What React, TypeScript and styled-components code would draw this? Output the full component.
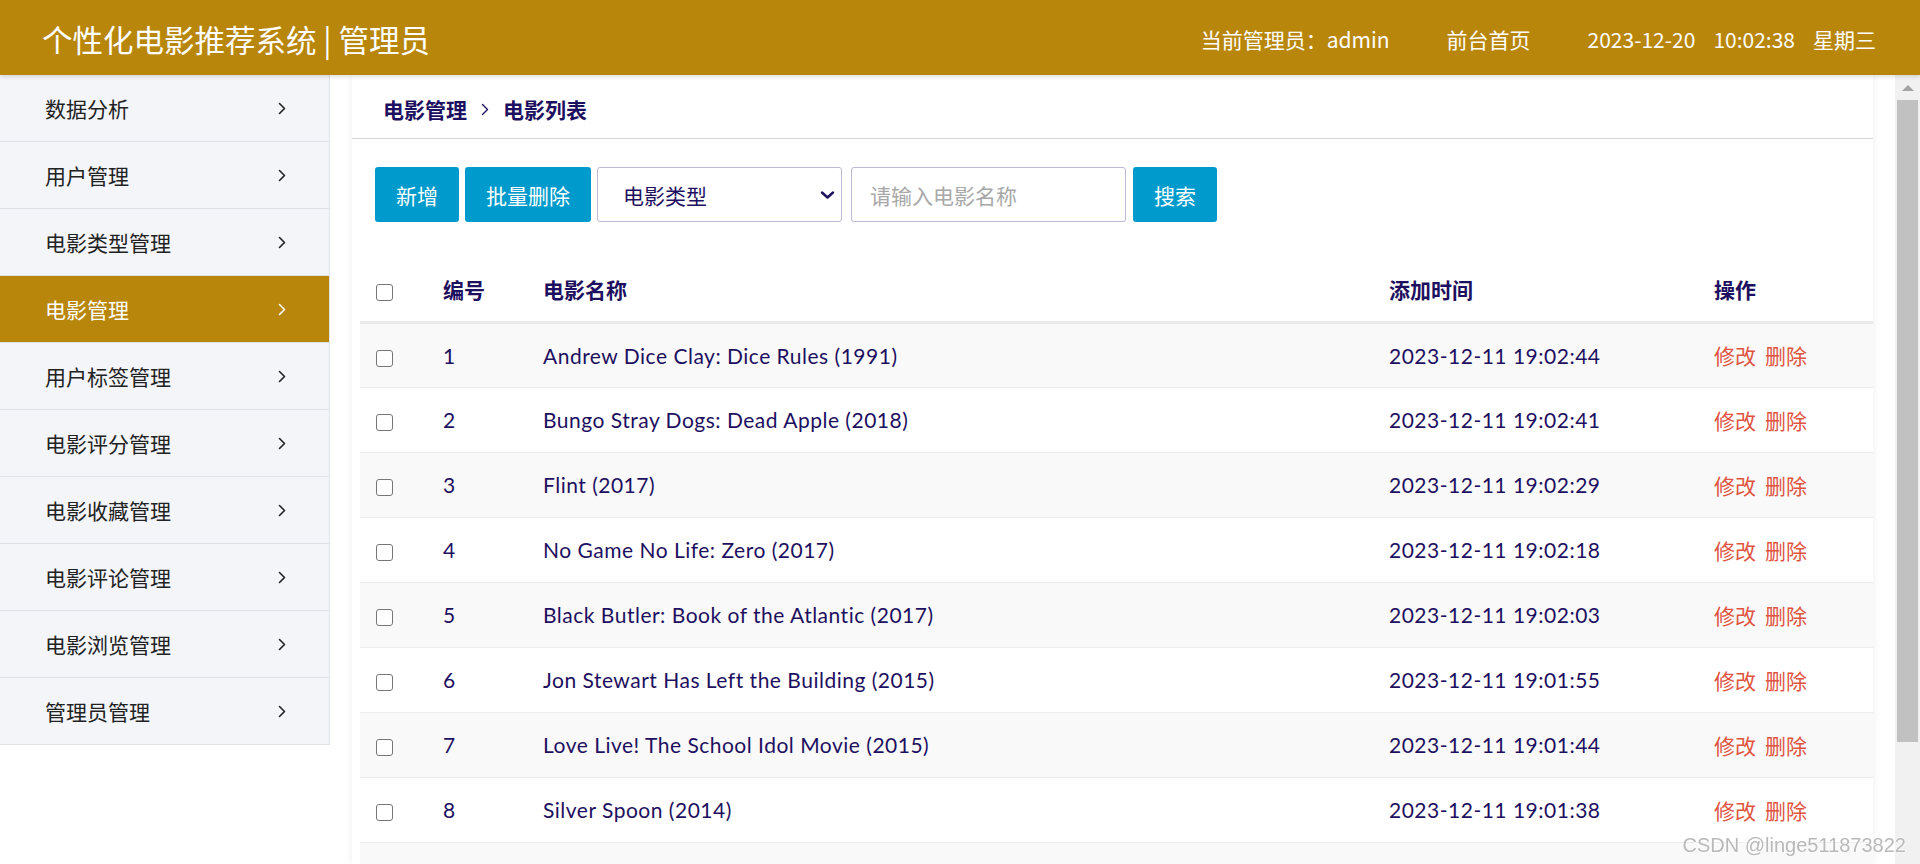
import React from 'react';
import styled, { createGlobalStyle } from 'styled-components';

const NAVY = '#1e1060';
const GOLD = '#b8860b';
const BLUE = '#009bcc';

const GlobalStyle = createGlobalStyle`
  html, body { margin: 0; padding: 0; height: 100%; overflow: hidden; background: #fff; }
  body { font-family: Lato, "Noto Sans CJK SC", sans-serif; }
  * { box-sizing: border-box; }
`;

const Page = styled.div`
  display: flex;
  flex-direction: column;
  width: 1920px;
  height: 864px;
`;

const Header = styled.header`
  height: 75px;
  flex: none;
  background: ${GOLD};
  display: flex;
  align-items: center;
  justify-content: space-between;
  padding: 0 44px 0 42px;
  color: #fff;
  font-family: "Noto Sans CJK SC", sans-serif;
  box-shadow: 0 2px 4px rgba(0, 0, 0, 0.12);
  position: relative;
  z-index: 2;
`;

const Title = styled.h1`
  margin: 0;
  font-size: 30.5px;
  font-weight: 400;
  line-height: 1;
  padding-top: 3px;
`;

const HeaderRight = styled.div`
  display: flex;
  align-items: center;
  gap: 57px;
  font-size: 21px;
  padding-top: 2px;
`;

const DateGroup = styled.div`
  display: flex;
  gap: 18px;
`;

const Body = styled.div`
  flex: 1;
  display: flex;
  min-height: 0;
`;

const Sidebar = styled.nav`
  width: 330px;
  flex: none;
  align-self: flex-start;
  background: #f3f5f9;
  border-right: 1px solid #dfe3e9;
`;

const MenuItem = styled.div<{ $active?: boolean }>`
  height: 67px;
  display: flex;
  align-items: center;
  justify-content: space-between;
  padding: 0 43px 0 45px;
  border-bottom: 1px solid #dfe3e9;
  font-size: 21px;
  font-family: "Noto Sans CJK SC", sans-serif;
  color: ${(p) => (p.$active ? '#fff' : '#222')};
  background: ${(p) => (p.$active ? GOLD : 'transparent')};
`;

const Panel = styled.main`
  width: 1521px;
  margin-left: 22px;
  flex: none;
  background: #fff;
  box-shadow: 0 0 8px rgba(0, 0, 0, 0.07);
  overflow: hidden;
`;

const Breadcrumb = styled.div`
  height: 64px;
  padding: 5px 0 0 31px;
  display: flex;
  align-items: center;
  gap: 14px;
  border-bottom: 1px solid #d4d4d4;
  font-weight: 700;
  font-size: 21px;
  color: ${NAVY};
  font-family: "Noto Sans CJK SC", sans-serif;
`;

const Toolbar = styled.div`
  margin-top: 28px;
  padding-left: 23px;
  display: flex;
  align-items: center;
  gap: 6px;
  height: 55px;
  font-family: "Noto Sans CJK SC", sans-serif;
`;

const Button = styled.button`
  height: 55px;
  padding: 0 21px;
  border: none;
  border-radius: 3px;
  background: ${BLUE};
  color: #fff;
  font-size: 21px;
  font-family: "Noto Sans CJK SC", sans-serif;
  cursor: pointer;
`;

const SelectBox = styled.div`
  width: 245px;
  height: 55px;
  margin-right: 3px;
  border: 1px solid #bdb8d4;
  border-radius: 3px;
  display: flex;
  align-items: center;
  justify-content: space-between;
  padding: 0 6px 0 25px;
  font-size: 21px;
  color: ${NAVY};
`;

const SearchInput = styled.input`
  width: 275px;
  height: 55px;
  margin-right: 1px;
  border: 1px solid #bdb8d4;
  border-radius: 3px;
  padding: 0 18px;
  font-size: 21px;
  font-family: "Noto Sans CJK SC", sans-serif;
  color: ${NAVY};
  outline: none;
  &::placeholder { color: #a8a8a8; }
`;

const Table = styled.table`
  margin: 36px 0 0 8px;
  width: 1513px;
  border-collapse: collapse;
  table-layout: fixed;
  color: ${NAVY};
`;

const Th = styled.th`
  height: 64px;
  padding: 0 0 0 16px;
  text-align: left;
  font-size: 21px;
  font-weight: 700;
  font-family: "Noto Sans CJK SC", sans-serif;
  border-bottom: 3px solid #ebebeb;
`;

const Tr = styled.tr`
  &:nth-child(odd) { background: #f9f9f9; }
`;

const Td = styled.td`
  height: 65px;
  padding: 0 0 0 16px;
  font-size: 21px;
  letter-spacing: 0.5px;
  border-bottom: 1px solid #ececec;
  white-space: nowrap;
`;

const Check = styled.span`
  display: inline-block;
  width: 17px;
  height: 17px;
  border: 1.5px solid #767676;
  border-radius: 3px;
  background: #fff;
  vertical-align: middle;
`;

const Actions = styled.div`
  display: flex;
  gap: 9px;
  letter-spacing: 0;
  font-family: "Noto Sans CJK SC", sans-serif;
  color: #e0533f;
`;

const ScrollTrack = styled.div`
  width: 25px;
  margin-left: 22px;
  flex: none;
  background: #f1f1f1;
  display: flex;
  flex-direction: column;
  align-items: center;
`;

const ScrollArrow = styled.div`
  height: 25px;
  display: flex;
  align-items: center;
  justify-content: center;
  &::before {
    content: '';
    border-left: 6px solid transparent;
    border-right: 6px solid transparent;
    border-bottom: 6px solid #a3a3a3;
  }
`;

const ScrollThumb = styled.div`
  width: 21px;
  height: 642px;
  background: #c1c1c1;
`;

const Watermark = styled.div`
  position: fixed;
  right: 14px;
  bottom: 8px;
  line-height: 22px;
  font-size: 20px;
  font-family: "Liberation Sans", Arial, sans-serif;
  color: #b9b9b9;
  text-shadow: 0 0 2px #fff, 0 0 2px #fff;
  pointer-events: none;
`;

const Chevron: React.FC<{ color?: string; w?: number; h?: number; sw?: number }> = ({ color = '#222', w = 8, h = 13, sw = 1.6 }) => (
  <svg width={w} height={h} viewBox="0 0 8 13" fill="none">
    <polyline points="1.5,1.5 6.5,6.5 1.5,11.5" stroke={color} strokeWidth={sw} strokeLinecap="round" strokeLinejoin="round" />
  </svg>
);

const ChevronDown = () => (
  <svg width="15" height="10" viewBox="0 0 15 10" fill="none">
    <polyline points="2,2.5 7.5,7.5 13,2.5" stroke={NAVY} strokeWidth="2.4" strokeLinecap="round" strokeLinejoin="round" />
  </svg>
);

const menu = ['数据分析', '用户管理', '电影类型管理', '电影管理', '用户标签管理', '电影评分管理', '电影收藏管理', '电影评论管理', '电影浏览管理', '管理员管理'];

const movies = [
  ['1', 'Andrew Dice Clay: Dice Rules (1991)', '2023-12-11 19:02:44'],
  ['2', 'Bungo Stray Dogs: Dead Apple (2018)', '2023-12-11 19:02:41'],
  ['3', 'Flint (2017)', '2023-12-11 19:02:29'],
  ['4', 'No Game No Life: Zero (2017)', '2023-12-11 19:02:18'],
  ['5', 'Black Butler: Book of the Atlantic (2017)', '2023-12-11 19:02:03'],
  ['6', 'Jon Stewart Has Left the Building (2015)', '2023-12-11 19:01:55'],
  ['7', 'Love Live! The School Idol Movie (2015)', '2023-12-11 19:01:44'],
  ['8', 'Silver Spoon (2014)', '2023-12-11 19:01:38'],
];

export default function App() {
  return (
    <Page>
      <GlobalStyle />
      <Header>
        <Title>个性化电影推荐系统 | 管理员</Title>
        <HeaderRight>
          <span>当前管理员：admin</span>
          <span>前台首页</span>
          <DateGroup>
            <span>2023-12-20</span>
            <span>10:02:38</span>
            <span>星期三</span>
          </DateGroup>
        </HeaderRight>
      </Header>
      <Body>
        <Sidebar>
          {menu.map((m) => (
            <MenuItem key={m} $active={m === '电影管理'}>
              <span>{m}</span>
              <Chevron color={m === '电影管理' ? '#fff' : '#222'} />
            </MenuItem>
          ))}
        </Sidebar>
        <Panel>
          <Breadcrumb>
            <span>电影管理</span>
            <Chevron color={NAVY} w={8} h={13} sw={1.4} />
            <span>电影列表</span>
          </Breadcrumb>
          <Toolbar>
            <Button>新增</Button>
            <Button>批量删除</Button>
            <SelectBox>
              <span>电影类型</span>
              <ChevronDown />
            </SelectBox>
            <SearchInput placeholder="请输入电影名称" />
            <Button>搜索</Button>
          </Toolbar>
          <Table>
            <colgroup>
              <col style={{ width: 67 }} />
              <col style={{ width: 100 }} />
              <col style={{ width: 846 }} />
              <col style={{ width: 325 }} />
              <col style={{ width: 175 }} />
            </colgroup>
            <thead>
              <tr>
                <Th><Check /></Th>
                <Th>编号</Th>
                <Th>电影名称</Th>
                <Th>添加时间</Th>
                <Th>操作</Th>
              </tr>
            </thead>
            <tbody>
              {movies.map(([id, name, time]) => (
                <Tr key={id}>
                  <Td><Check /></Td>
                  <Td>{id}</Td>
                  <Td>{name}</Td>
                  <Td>{time}</Td>
                  <Td>
                    <Actions>
                      <span>修改</span>
                      <span>删除</span>
                    </Actions>
                  </Td>
                </Tr>
              ))}
              <Tr>
                <Td />
                <Td />
                <Td />
                <Td />
                <Td />
              </Tr>
            </tbody>
          </Table>
        </Panel>
        <ScrollTrack>
          <ScrollArrow />
          <ScrollThumb />
        </ScrollTrack>
      </Body>
      <Watermark>CSDN @linge511873822</Watermark>
    </Page>
  );
}
